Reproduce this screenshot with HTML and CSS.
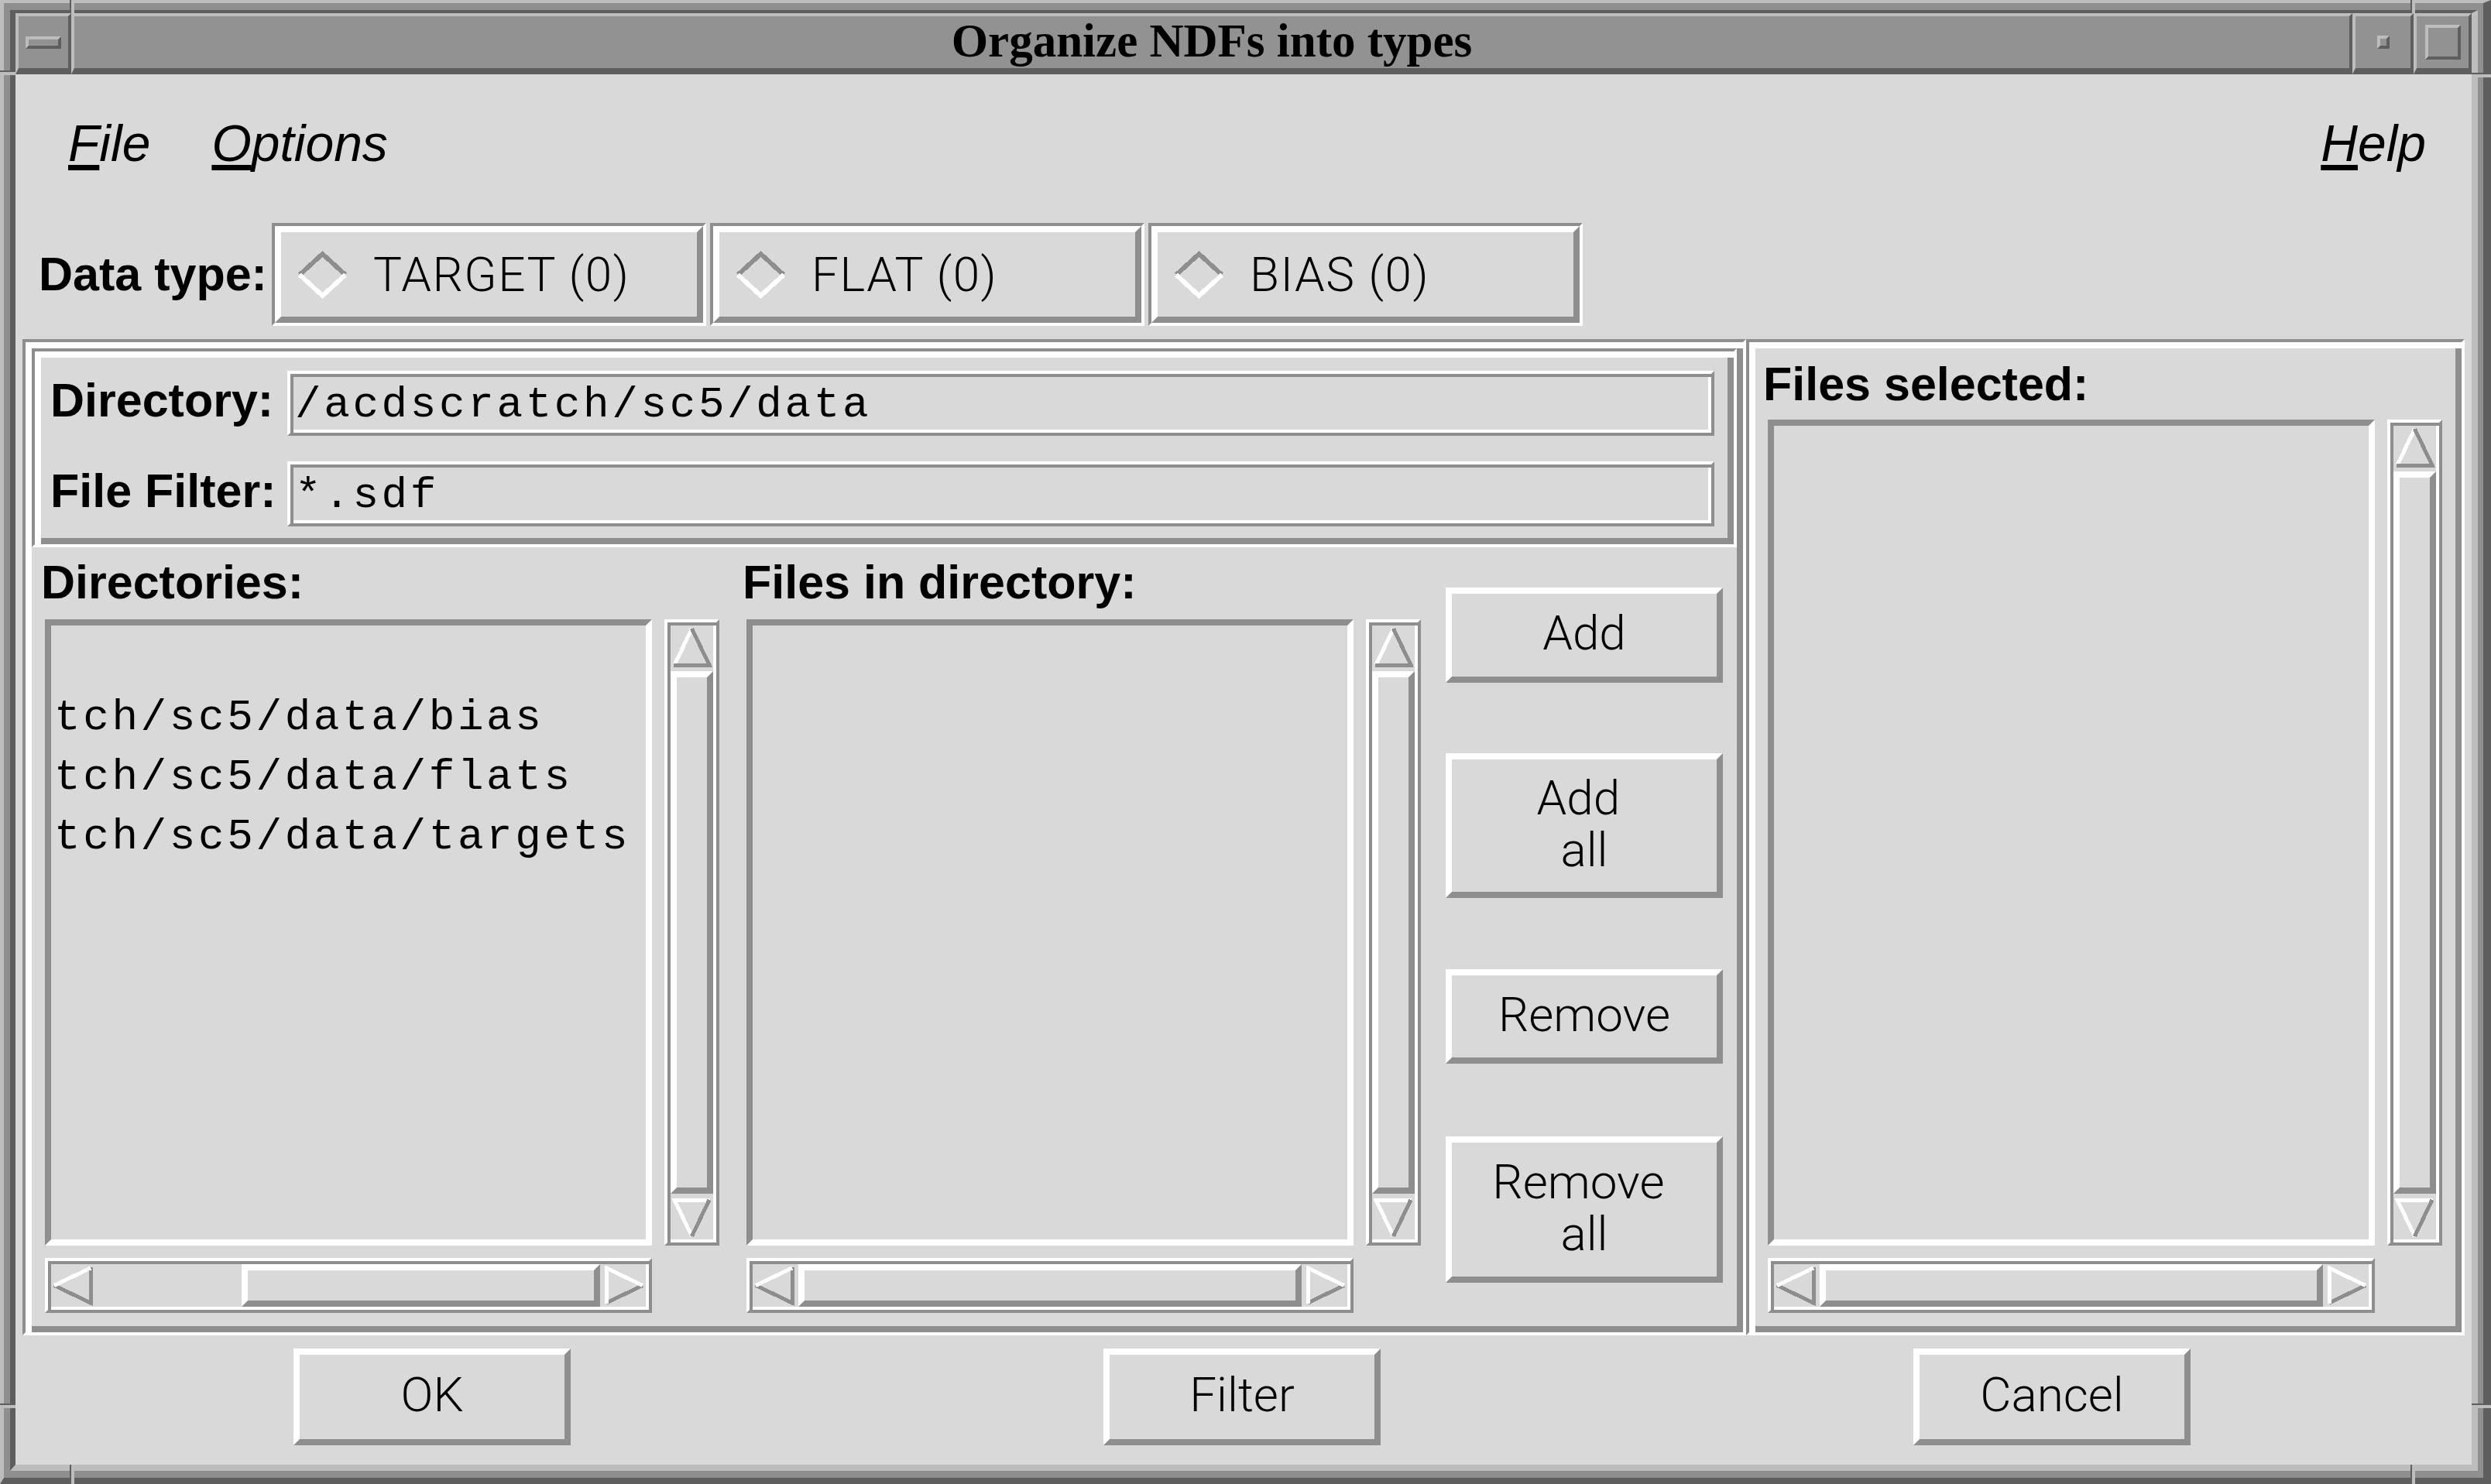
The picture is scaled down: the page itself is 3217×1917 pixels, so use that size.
FILE: index.html
```html
<!DOCTYPE html>
<html>
<head>
<meta charset="utf-8">
<title>Organize NDFs into types</title>
<link rel="stylesheet" href="styles.css">
</head>
<body>
<div class="window">
  <div class="frame-inner">
    <div class="titlebar">
      <div class="tb-piece tb-menu"><span class="ico ico-bar"></span></div>
      <div class="tb-piece tb-title">Organize NDFs into types</div>
      <div class="tb-piece tb-min"><span class="ico ico-min"></span></div>
      <div class="tb-piece tb-max"><span class="ico ico-max"></span></div>
    </div>
    <div class="content">
      <div class="menubar">
        <span class="menu"><u>F</u>ile</span>
        <span class="menu"><u>O</u>ptions</span>
        <span class="menu help"><u>H</u>elp</span>
      </div>

      <div class="datarow">
        <span class="label datalabel">Data type:</span>
        <div class="radio"><div class="radio-in">
          <svg class="diamond" viewBox="0 0 67 62" shape-rendering="crispEdges"><polyline points="4,31 33.5,4 63,31" fill="none" stroke="#8e8e8e" stroke-width="6"/><polyline points="4,31 33.5,58 63,31" fill="none" stroke="#ffffff" stroke-width="6"/></svg>
          <span class="rtext">TARGET (0)</span>
        </div></div>
        <div class="radio"><div class="radio-in">
          <svg class="diamond" viewBox="0 0 67 62" shape-rendering="crispEdges"><polyline points="4,31 33.5,4 63,31" fill="none" stroke="#8e8e8e" stroke-width="6"/><polyline points="4,31 33.5,58 63,31" fill="none" stroke="#ffffff" stroke-width="6"/></svg>
          <span class="rtext">FLAT (0)</span>
        </div></div>
        <div class="radio"><div class="radio-in">
          <svg class="diamond" viewBox="0 0 67 62" shape-rendering="crispEdges"><polyline points="4,31 33.5,4 63,31" fill="none" stroke="#8e8e8e" stroke-width="6"/><polyline points="4,31 33.5,58 63,31" fill="none" stroke="#ffffff" stroke-width="6"/></svg>
          <span class="rtext">BIAS (0)</span>
        </div></div>
      </div>

      <div class="frames">
        <div class="groove mainframe">
          <div class="groove topbox">
            <span class="label flabel">Directory:</span>
            <div class="field">/acdscratch/sc5/data</div>
            <span class="label flabel">File Filter:</span>
            <div class="field">*.sdf</div>
          </div>

          <div class="lists">
            <div class="col">
              <div class="label collabel">Directories:</div>
              <div class="listrow">
                <div class="listbox"><div class="line">&nbsp;</div><div class="line">tch/sc5/data/bias</div><div class="line">tch/sc5/data/flats</div><div class="line">tch/sc5/data/targets</div></div>
                <div class="vscroll">
                  <svg class="arr" viewBox="0 0 55 55" shape-rendering="crispEdges"><path d="M27.5 4 L5 51" stroke="#fff" stroke-width="5" fill="none"/><path d="M27.5 4 L50 51 L4 51" stroke="#8e8e8e" stroke-width="5" fill="none"/></svg>
                  <div class="vthumb"></div>
                  <svg class="arr" viewBox="0 0 55 55" shape-rendering="crispEdges"><path d="M27.5 51 L5 4 L51 4" stroke="#fff" stroke-width="5" fill="none"/><path d="M50 4 L27.5 51" stroke="#8e8e8e" stroke-width="5" fill="none"/></svg>
                </div>
              </div>
              <div class="hscroll">
                <svg class="arr" viewBox="0 0 55 55" shape-rendering="crispEdges"><path d="M4 27.5 L51 50 L51 4" stroke="#8e8e8e" stroke-width="5" fill="none"/><path d="M4 27.5 L51 5" stroke="#fff" stroke-width="5" fill="none"/></svg>
                <div class="hthumb hthumb-part"></div>
                <svg class="arr" viewBox="0 0 55 55" shape-rendering="crispEdges"><path d="M51 27.5 L4 50" stroke="#8e8e8e" stroke-width="5" fill="none"/><path d="M4 51 L4 5 L51 27.5" stroke="#fff" stroke-width="5" fill="none"/></svg>
              </div>
            </div>

            <div class="col">
              <div class="label collabel">Files in directory:</div>
              <div class="listrow">
                <div class="listbox"></div>
                <div class="vscroll">
                  <svg class="arr" viewBox="0 0 55 55" shape-rendering="crispEdges"><path d="M27.5 4 L5 51" stroke="#fff" stroke-width="5" fill="none"/><path d="M27.5 4 L50 51 L4 51" stroke="#8e8e8e" stroke-width="5" fill="none"/></svg>
                  <div class="vthumb"></div>
                  <svg class="arr" viewBox="0 0 55 55" shape-rendering="crispEdges"><path d="M27.5 51 L5 4 L51 4" stroke="#fff" stroke-width="5" fill="none"/><path d="M50 4 L27.5 51" stroke="#8e8e8e" stroke-width="5" fill="none"/></svg>
                </div>
              </div>
              <div class="hscroll">
                <svg class="arr" viewBox="0 0 55 55" shape-rendering="crispEdges"><path d="M4 27.5 L51 50 L51 4" stroke="#8e8e8e" stroke-width="5" fill="none"/><path d="M4 27.5 L51 5" stroke="#fff" stroke-width="5" fill="none"/></svg>
                <div class="hthumb hthumb-full"></div>
                <svg class="arr" viewBox="0 0 55 55" shape-rendering="crispEdges"><path d="M51 27.5 L4 50" stroke="#8e8e8e" stroke-width="5" fill="none"/><path d="M4 51 L4 5 L51 27.5" stroke="#fff" stroke-width="5" fill="none"/></svg>
              </div>
            </div>

            <div class="btncol">
              <div class="btn btn-add">Add</div>
              <div class="btn btn-addall">Add&nbsp;<br>all</div>
              <div class="btn btn-remove">Remove</div>
              <div class="btn btn-removeall">Remove&nbsp;<br>all</div>
            </div>
          </div>
        </div>

        <div class="groove sideframe">
          <div class="label sidelabel">Files selected:</div>
          <div class="listrow sidelistrow">
            <div class="listbox"></div>
            <div class="vscroll">
              <svg class="arr" viewBox="0 0 55 55" shape-rendering="crispEdges"><path d="M27.5 4 L5 51" stroke="#fff" stroke-width="5" fill="none"/><path d="M27.5 4 L50 51 L4 51" stroke="#8e8e8e" stroke-width="5" fill="none"/></svg>
              <div class="vthumb"></div>
              <svg class="arr" viewBox="0 0 55 55" shape-rendering="crispEdges"><path d="M27.5 51 L5 4 L51 4" stroke="#fff" stroke-width="5" fill="none"/><path d="M50 4 L27.5 51" stroke="#8e8e8e" stroke-width="5" fill="none"/></svg>
            </div>
          </div>
          <div class="hscroll">
            <svg class="arr" viewBox="0 0 55 55" shape-rendering="crispEdges"><path d="M4 27.5 L51 50 L51 4" stroke="#8e8e8e" stroke-width="5" fill="none"/><path d="M4 27.5 L51 5" stroke="#fff" stroke-width="5" fill="none"/></svg>
            <div class="hthumb hthumb-full"></div>
            <svg class="arr" viewBox="0 0 55 55" shape-rendering="crispEdges"><path d="M51 27.5 L4 50" stroke="#8e8e8e" stroke-width="5" fill="none"/><path d="M4 51 L4 5 L51 27.5" stroke="#fff" stroke-width="5" fill="none"/></svg>
          </div>
        </div>
      </div>

      <div class="bottombar">
        <div class="btn bbtn">OK</div>
        <div class="btn bbtn">Filter</div>
        <div class="btn bbtn">Cancel</div>
      </div>
    </div>
  </div>
</div>
<span class="mark mark-v mark-tl-v"></span>
<span class="mark mark-h mark-tl-h"></span>
<span class="mark mark-v mark-tr-v"></span>
<span class="mark mark-h mark-tr-h"></span>
<span class="mark mark-v mark-bl-v"></span>
<span class="mark mark-h mark-bl-h"></span>
<span class="mark mark-v mark-br-v"></span>
<span class="mark mark-h mark-br-h"></span>
</body>
</html>
```

FILE: styles.css
```css
* { box-sizing: border-box; }

html, body {
  margin: 0;
  padding: 0;
}

body {
  width: 3217px;
  height: 1917px;
  overflow: hidden;
  background: #8f8f8f;
  font-family: "Liberation Sans", Arial, sans-serif;
  color: #000;
}

/* ---------- window manager frame ---------- */
.window {
  width: 3217px;
  height: 1917px;
  border-style: solid;
  border-width: 4px 10px 8px 5px;
  border-color: #bdbdbd #5e5e5e #5e5e5e #bdbdbd;
  background: #8f8f8f;
  padding: 9px 7px 9px 8px;
}

.frame-inner {
  height: 100%;
  border-style: solid;
  border-width: 4px 8px 8px 7px;
  border-color: #5e5e5e #bdbdbd #bdbdbd #5e5e5e;
  background: #d9d9d9;
  display: flex;
  flex-direction: column;
}

.titlebar {
  display: flex;
  height: 79px;
  flex: none;
}

.tb-piece {
  border-style: solid;
  border-width: 4px 4px 8px 4px;
  border-color: #bdbdbd #5e5e5e #5e5e5e #bdbdbd;
  background: #929292;
  display: flex;
  align-items: center;
  justify-content: center;
}

.tb-menu { width: 72px; }
.tb-min { width: 79px; }
.tb-max { width: 75px; }

.tb-title {
  flex: 1;
  align-items: flex-start;
  font-family: "Liberation Serif", "Times New Roman", serif;
  font-weight: bold;
  font-size: 61px;
  line-height: 63px;
  color: #000;
}

.ico {
  display: block;
  border: 4px solid;
  border-color: #bdbdbd #5e5e5e #5e5e5e #bdbdbd;
  background: #929292;
}
.ico-bar { width: 46px; height: 16px; }
.ico-min { width: 16px; height: 17px; }
.ico-max { width: 46px; height: 45px; }

.mark { position: absolute; display: block; }
.mark-v { width: 6px; border-left: 2px solid #5e5e5e; background: #bdbdbd; }
.mark-h { height: 6px; border-top: 2px solid #5e5e5e; background: #bdbdbd; }
.mark-tl-v { left: 90px; top: 0; height: 17px; }
.mark-tl-h { left: 0; top: 91px; width: 20px; }
.mark-tr-v { left: 3113px; top: 0; height: 17px; }
.mark-tr-h { left: 3192px; top: 94px; width: 25px; }
.mark-bl-v { left: 90px; top: 1892px; height: 25px; }
.mark-bl-h { left: 0; top: 1813px; width: 20px; }
.mark-br-v { left: 3113px; top: 1892px; height: 25px; }
.mark-br-h { left: 3192px; top: 1813px; width: 25px; }

/* ---------- application content ---------- */
.content {
  flex: 1;
  display: flex;
  flex-direction: column;
}

.menubar {
  height: 192px;
  flex: none;
  display: flex;
  padding: 53px 59px 0 68px;
  font-style: italic;
  font-size: 66px;
  line-height: 72px;
}

.menu + .menu { margin-left: 79px; }
.menu.help { margin-left: auto; }

.menu u {
  text-decoration: underline;
  text-decoration-thickness: 7px;
  text-underline-offset: 5px;
  text-decoration-skip-ink: none;
}

.label {
  font-weight: bold;
  font-size: 61px;
  white-space: nowrap;
}

.datarow {
  height: 133px;
  flex: none;
  display: flex;
  padding-left: 30px;
  margin-bottom: 17px;
}

.datalabel {
  width: 301px;
  line-height: 132px;
}

.radio {
  width: 561px;
  margin-right: 5px;
  border: 4px solid;
  border-color: #8e8e8e #fff #fff #8e8e8e;
}

.radio-in {
  height: 100%;
  border: 8px solid;
  border-color: #fff #8e8e8e #8e8e8e #fff;
  display: flex;
  align-items: center;
  padding-left: 20px;
}

.diamond {
  width: 67px;
  height: 62px;
  flex: none;
  margin-right: 32px;
}

.rtext {
  font-family: Roboto, "Liberation Sans", sans-serif;
  font-weight: 300;
  font-size: 62px;
  letter-spacing: 1.5px;
  line-height: 68px;
  white-space: nowrap;
}

/* ---------- 3D frames ---------- */
.groove {
  border: 4px solid;
  border-color: #8e8e8e #fff #fff #8e8e8e;
  box-shadow: inset 8px 8px 0 #fff, inset -8px -8px 0 #8e8e8e;
}

.frames {
  height: 1287px;
  flex: none;
  display: flex;
  padding-left: 9px;
}

.mainframe {
  width: 2226px;
  padding: 8px;
  display: flex;
  flex-direction: column;
}

.topbox {
  height: 257px;
  flex: none;
  display: grid;
  grid-template-columns: 306px 1fr;
  grid-template-rows: 84px 84px;
  row-gap: 33px;
  padding: 25px 25px 23px 20px;
}

.flabel { line-height: 76px; }

.field {
  height: 84px;
  border: 4px solid;
  border-color: #fff #8e8e8e #8e8e8e #fff;
  box-shadow: inset 4px 4px 0 #8e8e8e, inset -4px -4px 0 #fff;
  padding: 6px 6px 0 6px;
  font-family: "Liberation Mono", "Courier New", monospace;
  font-size: 56px;
  letter-spacing: 3.6px;
  line-height: 68px;
  white-space: pre;
  overflow: hidden;
}

.lists {
  flex: 1;
  display: flex;
  padding: 0 18px 17px 17px;
}

.col {
  width: 871px;
  display: flex;
  flex-direction: column;
  margin-right: 35px;
}
.col + .col { margin-right: 32px; }

.collabel {
  height: 93px;
  line-height: 90px;
  margin-left: -5px;
}

.listrow {
  height: 809px;
  display: flex;
  gap: 16px;
}

.listbox {
  flex: 1;
  border: 8px solid;
  border-color: #8e8e8e #fff #fff #8e8e8e;
  padding: 4px 0 0 4px;
  font-family: "Liberation Mono", "Courier New", monospace;
  font-size: 56px;
  letter-spacing: 3.6px;
  line-height: 77px;
  white-space: pre;
  overflow: hidden;
}

/* ---------- scrollbars ---------- */
.vscroll, .hscroll {
  border: 4px solid;
  border-color: #fff #8e8e8e #8e8e8e #fff;
  box-shadow: inset 4px 4px 0 #8e8e8e, inset -4px -4px 0 #fff;
  padding: 4px;
  display: flex;
}

.vscroll {
  width: 71px;
  flex: none;
  flex-direction: column;
}

.hscroll {
  height: 71px;
  margin-top: 16px;
  width: 784px;
}

.arr {
  width: 55px;
  height: 55px;
  flex: none;
  display: block;
}

.vthumb {
  flex: 1;
  margin: 4px 0;
  border: 8px solid;
  border-color: #fff #8e8e8e #8e8e8e #fff;
}

.hthumb {
  border: 8px solid;
  border-color: #fff #8e8e8e #8e8e8e #fff;
}
.hthumb-part { margin-left: auto; width: 463px; margin-right: 4px; }
.hthumb-full { flex: 1; margin: 0 4px; }

/* ---------- push buttons ---------- */
.btn {
  border: 8px solid;
  border-color: #fff #8e8e8e #8e8e8e #fff;
  display: flex;
  align-items: center;
  justify-content: center;
  text-align: center;
  font-family: Roboto, "Liberation Sans", sans-serif;
  font-weight: 300;
  font-size: 62px;
  line-height: 67px;
  padding-bottom: 6px;
}

.btncol {
  width: 358px;
  display: flex;
  flex-direction: column;
  padding-top: 52px;
}

.btn-add { height: 123px; margin-bottom: 91px; }
.btn-addall { height: 187px; margin-bottom: 92px; }
.btn-remove { height: 122px; margin-bottom: 94px; }
.btn-removeall { height: 189px; }

.sideframe {
  width: 928px;
  padding: 8px 25px 17px 24px;
  display: flex;
  flex-direction: column;
}

.sidelabel {
  height: 92px;
  line-height: 92px;
  margin-left: -6px;
}

.sidelistrow { height: 1067px; }

.bottombar {
  flex: 1;
  display: flex;
  justify-content: space-between;
  align-items: flex-start;
  padding: 17px 363px 0 359px;
}

.bbtn {
  width: 358px;
  height: 125px;
}
```
